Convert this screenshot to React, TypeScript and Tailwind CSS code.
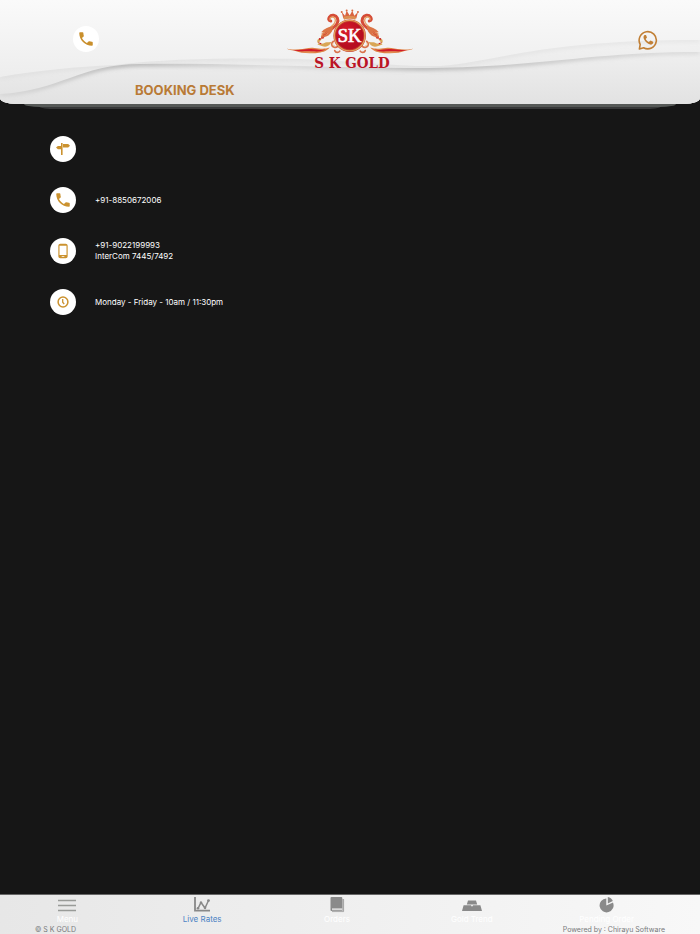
import React from 'react';
import { MdPhone, MdPhoneAndroid } from 'react-icons/md';

const SignIcon = () => (
  <svg viewBox="0 0 14 14" className="size-3.5" fill="currentColor">
    <path d="M5 1h1.6v12H5z" />
    <path d="M7 2h5.2L14 3.8 12.2 5.500H7z" />
    <path d="M5 4H1.900L0 5.600 1.900 7.300H5z" />
  </svg>
);

const ClockIcon = () => (
  <svg viewBox="0 0 12 12" className="size-3" fill="none" stroke="currentColor">
    <circle cx="6" cy="6" r="4.900" strokeWidth="1.500" />
    <path d="M5.700 3v3.200l1.500 2" strokeWidth="1.300" />
  </svg>
);

const WhatsappIcon = () => (
  <svg viewBox="0 0 20 20" className="size-5" fill="none">
    <path
      d="M1.400 19l.8-4.600A8.600 8.600 0 1 1 5.600 17.800z"
      stroke="currentColor"
      strokeWidth="1.600"
      strokeLinejoin="round"
    />
    <path
      d="M6.600 5C5.400 5.800 5.200 7.400 5.900 9c1.300 2.900 3.600 4.900 6.400 5.600 1.300.2 2.600-.5 3-1.800l-.2-1.100-2.600-1.200-1.700 1.500c-1.300-.7-2.400-1.800-3.100-3.100l1.300-1.500-1-2.500z"
      fill="currentColor"
    />
  </svg>
);

const MenuIcon = () => (
  <svg viewBox="0 0 20 16" className="h-4 w-5" fill="none" stroke="#999b98" strokeWidth="1.6">
    <path d="M1 3.500h18M1 8.500h18M1 13.500h18" />
  </svg>
);

const RatesIcon = () => (
  <svg viewBox="0 0 20 16" className="h-4 w-5" fill="none" stroke="#888">
    <path d="M3 0v13.700h15" strokeWidth="1.8" />
    <path d="M6 11.500l3-6 4 5.500 3.500-7.500" strokeWidth="1.500" />
    <g fill="#888" stroke="none">
      <circle cx="6" cy="11.300" r="1.300" />
      <circle cx="9" cy="5.800" r="1.300" />
      <circle cx="13" cy="10.700" r="1.300" />
      <circle cx="16.500" cy="3.600" r="1.400" />
    </g>
  </svg>
);

const OrdersIcon = () => (
  <svg viewBox="0 0 20 16" className="h-4 w-5">
    <path d="M5 2h12v12.500H5z" fill="#c4c4c4" />
    <path d="M16.600 2v12.600H5" fill="none" stroke="#999" strokeWidth=".7" />
    <rect x="3.500" y="0" width="11.800" height="14" rx="1" fill="#8a8a8a" />
    <path d="M5 11.300h10.300v2H5z" fill="#d8d8d8" />
  </svg>
);

const GoldIcon = () => (
  <svg viewBox="0 0 20 16" className="h-4 w-5" fill="#8a8a8a">
    <path d="M6 3.500h8l1.200 4H4.800z" />
    <path d="M1.600 8.200h7.300l1.100 1.600 1.100-1.600h7.300l1.600 5.800H0z" />
  </svg>
);

const PendingIcon = () => (
  <svg viewBox="0 0 20 16" className="h-4 w-5" fill="#8a8a8a">
    <path d="M9.300 1.400v7.200l6.700-3A7 7 0 1 1 9.300 1.400z" />
    <path d="M10.800 0a6.600 6.600 0 0 1 5 3.900l-5 2.500z" />
  </svg>
);

// Right half mirrors the left one
const Feather = () => (
  <g>
    <path
      d="M50 146c12 5 23 2 37 2 19-1 29-6 46-4 17 2 29 5 47-1-11 13-25 15-38 16-16 2-48 3-70-7-8-1-15-1-22-6z"
      fill="#df8246"
    />
    <path d="M63 150c20 3 39-4 61-3 15 0 29 6 43 2-15 8-35 7-49 6-21-1-36-1-55-5z" fill="#d0192a" />
    <path d="M96 155c17-1 29 0 45 0-15 4-30 4-45 0z" fill="#e5a362" />
  </g>
);

const Lion = () => (
  <g>
    <path
      d="M183 63c-8-1-7-7-4-12 6-9 20-6 24 3 5 12-3 22-14 30-13 9-25 14-31 28"
      fill="none"
      stroke="#d54c37"
      strokeWidth="9"
      strokeLinecap="round"
    />
    <path
      d="M181 59c-2-8 9-11 14-5 6 10-3 20-12 27-13 8-22 14-27 26"
      fill="none"
      stroke="#e6a063"
      strokeWidth="4"
      strokeLinecap="round"
    />
    <path d="M191 78c-13 2-28 8-37 19 7 1 13 0 19-3-6 5-14 7-21 8 9 3 17 0 24-5-4 7-13 10-24 12 14 6 27-1 35-15z" fill="#db7547" />
    <path d="M156 116c-12-3-15 5-13 12 8 6 16 4 24 0 7-2 12 1 18-3-4 13-16 19-29 13l-13-4" fill="#d9a655" />
    <path d="M147 114l10 2-9 4zM144 127l12 3-4 3z" fill="#c81d27" />
    <path
      d="M191 124c-8 6-7 15 2 18 9 2 14-3 12-10m-10 20c3 7 11 7 15 2"
      fill="none"
      stroke="#d9714a"
      strokeWidth="5"
      strokeLinecap="round"
    />
    <path d="M190 129c-3 6 1 9 6 9" fill="none" stroke="#e8b375" strokeWidth="2" />
  </g>
);

const Crest = () => (
  <svg viewBox="48 24 386 144" className="h-12 w-32">
    <defs>
      <radialGradient id="seal" cx="40%" cy="35%">
        <stop offset="0" stopColor="#d91d2c" />
        <stop offset="1" stopColor="#b70d20" />
      </radialGradient>
    </defs>
    <Feather />
    <Lion />
    <g transform="translate(482 0) scale(-1 1)">
      <Feather />
      <Lion />
    </g>
    <circle cx="240" cy="107" r="45" fill="url(#seal)" stroke="#c4352c" strokeWidth="8" />
    <circle cx="240" cy="107" r="46" fill="none" stroke="#e2a05c" strokeWidth="4" />
    <path d="M216 36l10 11 5-15 9 14 8-14 6 15 11-11-5 19c-13-4-26-4-39 0z" fill="#d9623f" />
    <path d="M221 50c12-4 25-4 38 0l-2 9c-11-4-23-4-34 0z" fill="#dd8d50" />
    <g fill="#db6940">
      <circle cx="216" cy="36" r="3" />
      <circle cx="231" cy="31" r="3" />
      <circle cx="248" cy="31" r="3" />
      <circle cx="265" cy="36" r="3" />
    </g>
    <text
      x="240"
      y="126"
      textAnchor="middle"
      fill="#fff"
      stroke="#fff"
      strokeWidth="2"
      className="font-['Liberation_Serif',serif] text-[56px]"
    >
      SK
    </text>
  </svg>
);

const HeaderWaves = () => (
  <svg viewBox="0 0 700 104" preserveAspectRatio="none" className="absolute inset-0 h-full w-full">
    <defs>
      <linearGradient id="sheet" x1="0" y1="40" x2="0" y2="104" gradientUnits="userSpaceOnUse">
        <stop offset="0" stopColor="#f2f2f2" />
        <stop offset="1" stopColor="#e2e2e2" />
      </linearGradient>
      <linearGradient id="edge" x1="0" y1="0" x2="700" y2="0" gradientUnits="userSpaceOnUse">
        <stop offset="0" stopColor="#aaa" stopOpacity=".3" />
        <stop offset=".18" stopColor="#888" stopOpacity=".7" />
        <stop offset=".4" stopColor="#aaa" stopOpacity=".3" />
        <stop offset=".6" stopColor="#888" stopOpacity=".65" />
        <stop offset="1" stopColor="#aaa" stopOpacity=".35" />
      </linearGradient>
      <filter id="soft" x="-5%" y="-50%" width="110%" height="200%">
        <feGaussianBlur stdDeviation="2" />
      </filter>
      <clipPath id="back">
        <path d="M0 77C40 70 75 67 115 65C170 58 240 58 300 59C360 61 395 67 440 66C500 61 540 40 700 40V104H0Z" />
      </clipPath>
      <clipPath id="front">
        <path d="M0 94C60 91 80 64 140 64C240 63 330 68 430 68C540 67 590 52 700 52V104H0Z" />
      </clipPath>
    </defs>
    <g clipPath="url(#back)">
      <rect width="700" height="104" fill="url(#sheet)" />
      <path
        d="M0 77C40 70 75 67 115 65C170 58 240 58 300 59C360 61 395 67 440 66C500 61 540 40 700 40"
        fill="none"
        stroke="#bdbdbd"
        strokeOpacity=".25"
        strokeWidth="4"
        filter="url(#soft)"
      />
    </g>
    <g clipPath="url(#front)">
      <rect width="700" height="104" fill="url(#sheet)" />
      <path
        d="M0 94C60 91 80 64 140 64C240 63 330 68 430 68C540 67 590 52 700 52"
        fill="none"
        stroke="url(#edge)"
        strokeWidth="4"
        filter="url(#soft)"
      />
    </g>
  </svg>
);

const contacts = [
  { id: 'address', label: 'Address', icon: <SignIcon />, lines: [] },
  { id: 'phone', label: 'Phone', icon: <MdPhone className="size-[18px]" />, lines: ['+91-8850672006'] },
  {
    id: 'mobile',
    label: 'Mobile',
    icon: <MdPhoneAndroid className="size-4" stroke="currentColor" />,
    lines: ['+91-9022199993', 'InterCom 7445/7492'],
  },
  { id: 'hours', label: 'Hours', icon: <ClockIcon />, lines: ['Monday - Friday - 10am / 11:30pm'] },
];

const tabs = [
  { label: 'Menu', icon: <MenuIcon />, active: false },
  { label: 'Live Rates', icon: <RatesIcon />, active: true },
  { label: 'Orders', icon: <OrdersIcon />, active: false },
  { label: 'Gold Trend', icon: <GoldIcon />, active: false },
  { label: 'Pending Order', icon: <PendingIcon />, active: false },
];

const Header: React.FC = () => (
  <header>
    <div className="relative overflow-hidden rounded-b-[16px_6px] bg-linear-to-b from-[#fafafa] to-[#e9e9e9]">
      <HeaderWaves />
      <div className="relative grid grid-cols-3 pt-2">
        <a
          href="#call"
          aria-label="Call"
          className="mt-[18px] ml-[73px] flex size-[26px] items-center justify-center rounded-full bg-white text-[#c98f2c]"
        >
          <MdPhone className="size-[18px]" />
        </a>
        <div className="flex flex-col items-center">
          <Crest />
          <span className="pl-1 font-['DejaVu_Serif_Condensed','DejaVu_Serif',serif] text-[15px] leading-[14px] font-bold whitespace-nowrap text-[#bb1526]">
            S K GOLD
          </span>
        </div>
        <a href="#whatsapp" aria-label="WhatsApp" className="mt-[22px] mr-[42px] justify-self-end text-[#c17f35]">
          <WhatsappIcon />
        </a>
      </div>
      <h1 className="relative ml-[135px] pt-3 pb-1.5 text-[13px] leading-4 font-bold text-[#b97a35]">BOOKING DESK</h1>
    </div>
    <div className="mx-6 h-[3px] rounded-b-[16px_3px] bg-[#565957]" />
    <div className="mx-10 h-0.5 rounded-b-[16px_2px] bg-[#373838]" />
  </header>
);

const App: React.FC = () => {
  return (
    <div className="flex min-h-screen flex-col bg-[#161616] font-['Inter','Open_Sans',sans-serif]">
      <Header />

      <main className="flex-1 px-[50px] pt-[27px]">
        <ul className="space-y-[25px]">
          {contacts.map((c) => (
            <li key={c.id} className="flex items-center gap-[19px]">
              <span
                role="img"
                aria-label={c.label}
                className="flex size-[26px] shrink-0 items-center justify-center rounded-full bg-white text-[#cb922f]"
              >
                {c.icon}
              </span>
              <div className="text-[8px] leading-[11px] text-white">
                {c.lines.map((line) => (
                  <p key={line}>{line}</p>
                ))}
              </div>
            </li>
          ))}
        </ul>
      </main>

      <footer className="border-t border-[#666] bg-linear-to-r from-[#e7e7e7] to-[#f8f8f8] pt-0.5">
        <nav className="grid grid-cols-5 pr-[26px]">
          {tabs.map((tab) => (
            <a
              key={tab.label}
              href="#"
              className={`flex flex-col items-center text-[8px] leading-3 ${
                tab.active ? 'text-[#4d83c4]' : 'text-white'
              }`}
            >
              {tab.icon}
              {tab.label}
            </a>
          ))}
        </nav>
        <div className="flex justify-between px-[35px] text-[7px] leading-[9px] text-[#77797b]">
          <span>© S K GOLD</span>
          <span>Powered by : Chirayu Software</span>
        </div>
      </footer>
    </div>
  );
};

export default App;
